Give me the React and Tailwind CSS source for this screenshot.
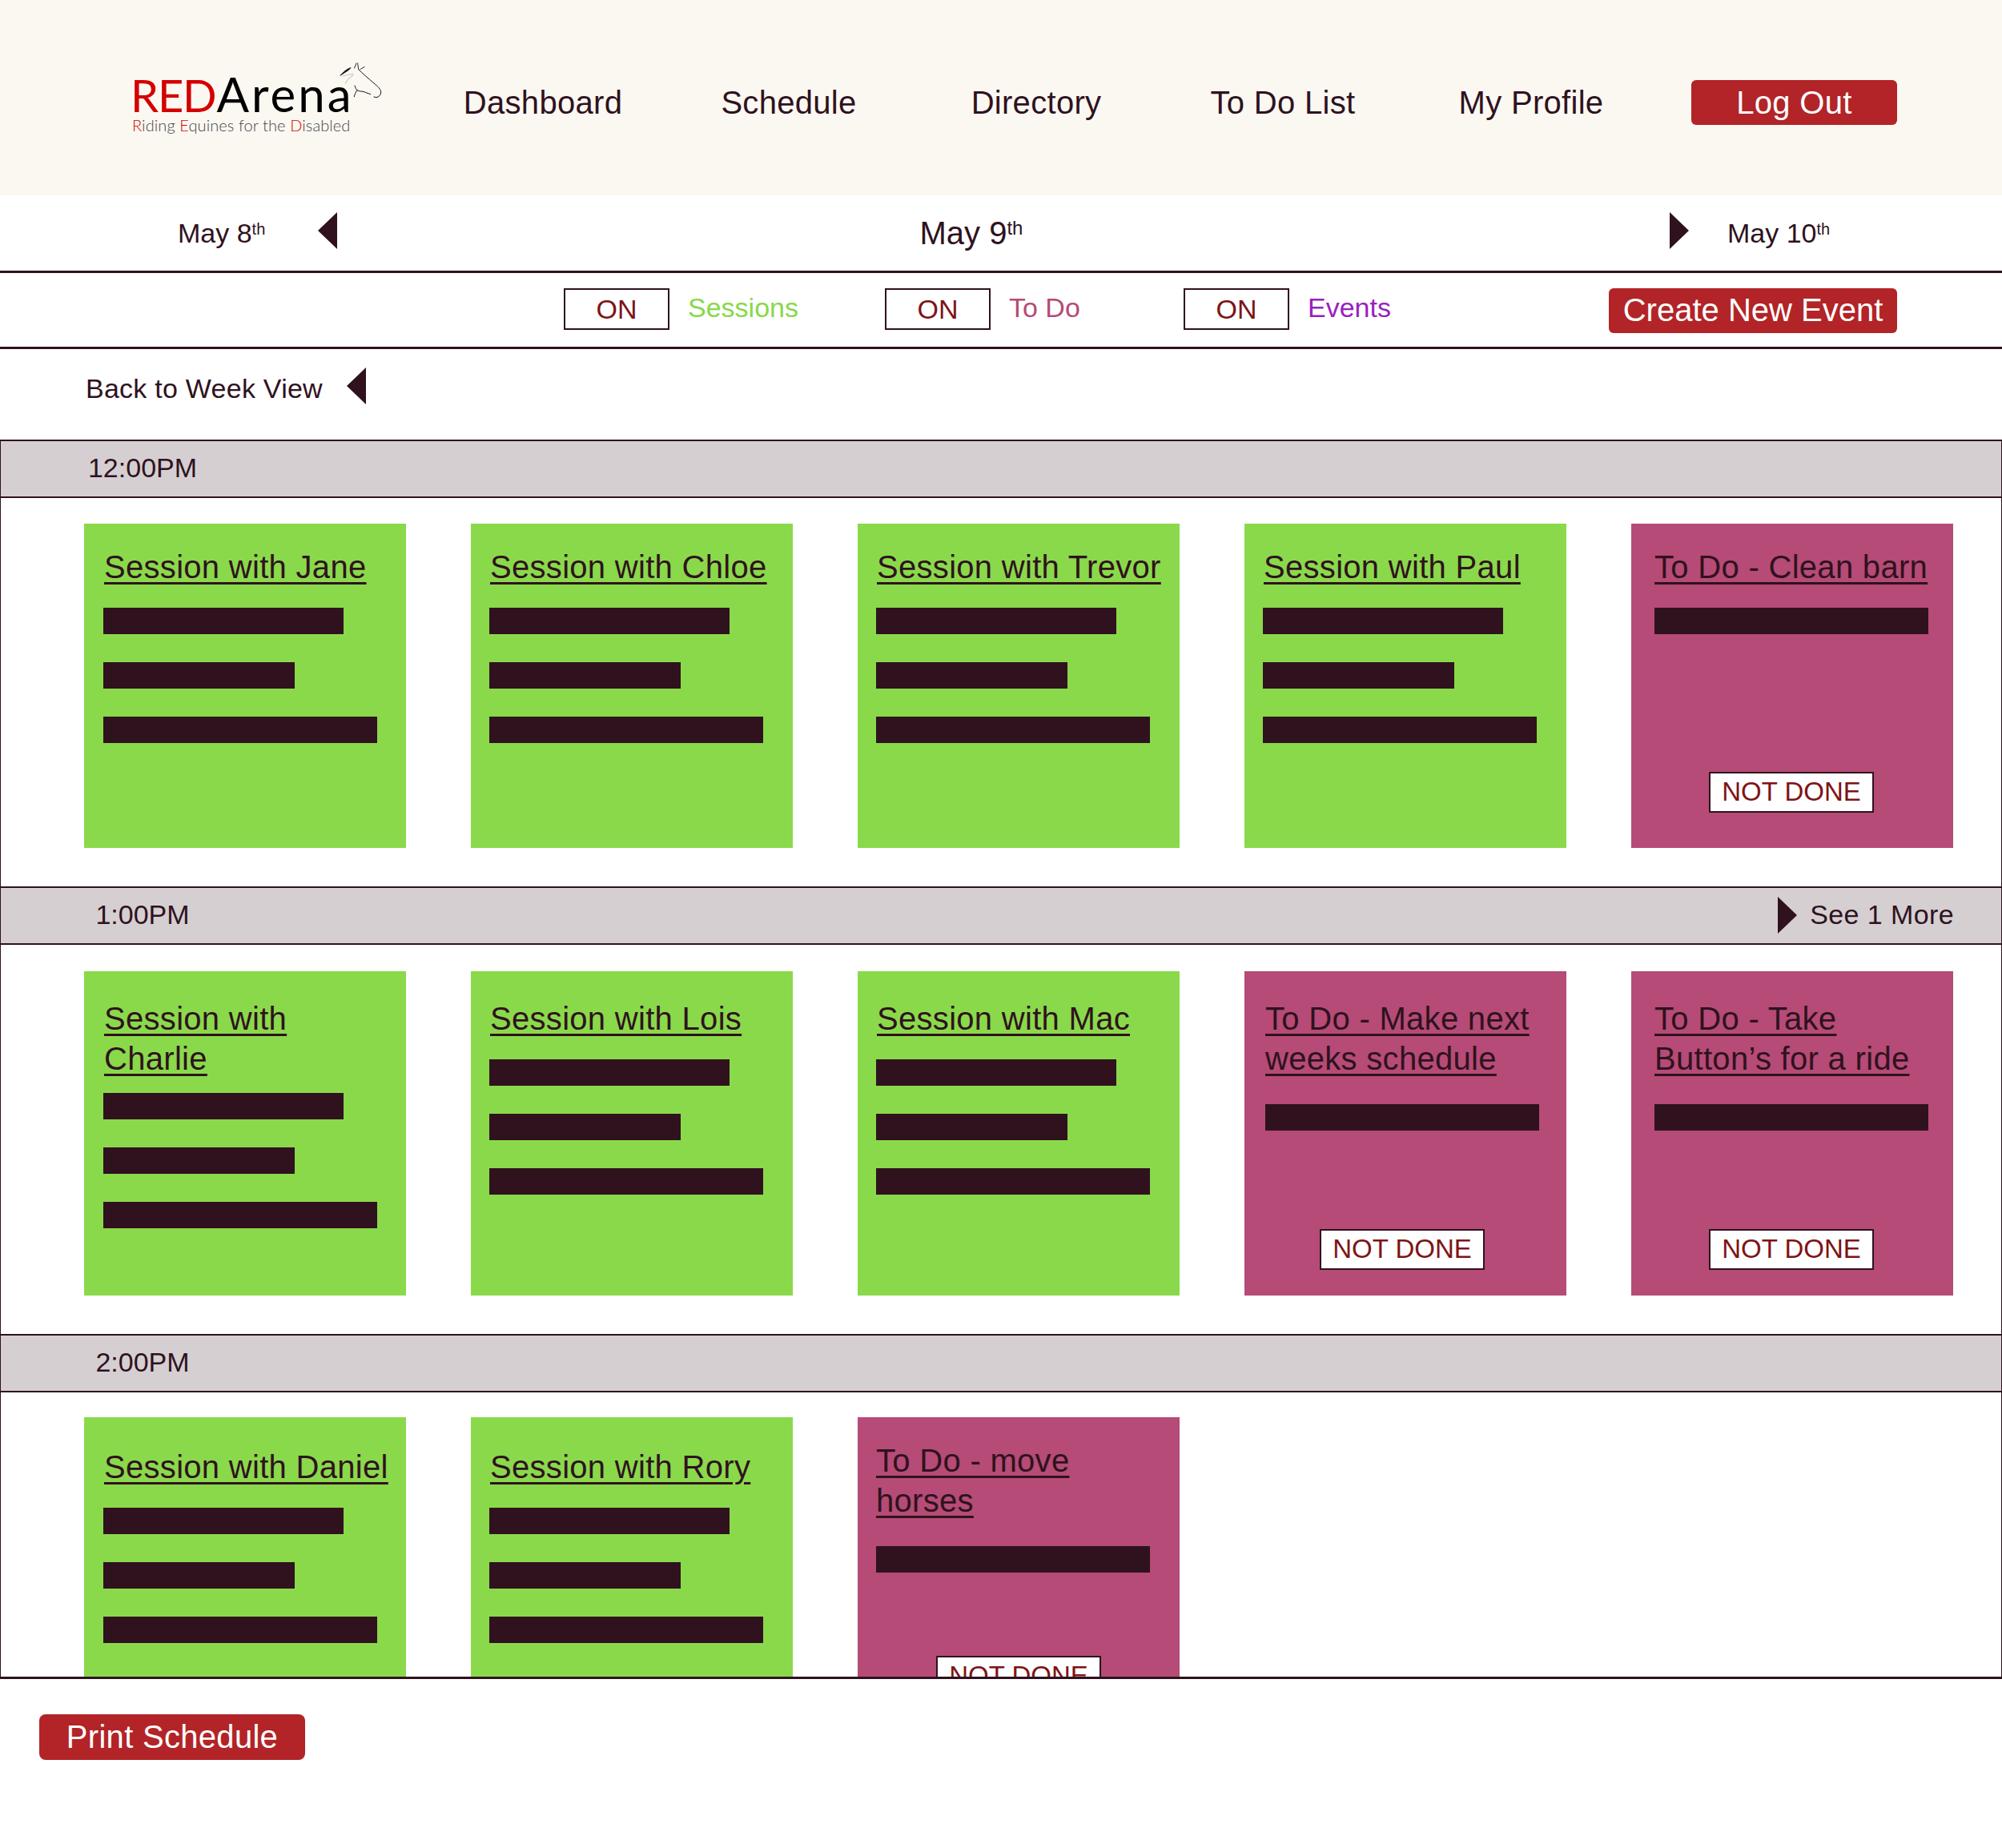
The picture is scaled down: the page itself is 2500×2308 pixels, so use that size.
const DARK = "#2f121e";

function Tri({ dir, className }) {
  return (
    <svg viewBox="0 0 24 46" preserveAspectRatio="none" className={className}>
      <polygon points={dir === "left" ? "24,0 24,46 0,23" : "0,0 0,46 24,23"} fill={DARK} />
    </svg>
  );
}

function Horse() {
  return (
    <svg viewBox="0 0 80 60" className="absolute left-[410px] top-[70px] w-[80px] h-[60px]" fill="none" stroke="#141414" strokeLinecap="round">
      <path d="M15 24 C19 20 23 16 28 14.5 C26 18 21 20 17 23 Z" fill="#141414" strokeWidth="0.8" />
      <path d="M18 25 C22 24 27 23 31 22" strokeWidth="0.5" stroke="#888" />
      <path d="M21.5 34 C23 30 27 26 31 24" strokeWidth="0.6" stroke="#888" />
      <path d="M32.5 15 L35 9 M37.7 16.5 L36.6 9 M40 16.5 L45 13.5" strokeWidth="0.9" />
      <path d="M37.7 16.7 C42 21 50 28 57 34 C62 38 65.7 42 65.7 45 C65.7 49 63 51 60 51.7 L57 51" strokeWidth="1" />
      <path d="M33 37 C34 40 35 42 36 42.7 C38 44 41 44 43 44.3 C46 45 49 46.5 52.7 47.7 M36 42.7 C34 45 33 48 32.3 50.7" strokeWidth="1" />
    </svg>
  );
}

function Header() {
  const items = [
    ["Dashboard", "w-[308px]"],
    ["Schedule", "w-[306px]"],
    ["Directory", "w-[312px]"],
    ["To Do List", "w-[304px]"],
    ["My Profile", "w-[316px]"],
  ];
  return (
    <header className="flex items-center h-[244px] bg-[#fbf8f2]">
      <div className="relative w-[524px] h-[244px] shrink-0 pt-[91px] pl-[163px] font-['Lato',sans-serif] whitespace-nowrap">
        <div className="text-[56px] leading-[53px]">
          <span className="text-[#d40000] tracking-[-1.2px]">RED</span>
          <span className="text-black text-[60px] tracking-[3px] ml-[1px]">Arena</span>
        </div>
        <div className="ml-[2px] text-[20px] leading-[22px] font-light tracking-[0.1px] text-[#444]">
          <span className="text-[#d40000]">R</span>iding <span className="text-[#d40000]">E</span>quines for the <span className="text-[#d40000]">D</span>isabled
        </div>
        <Horse />
      </div>
      <nav className="flex items-center mt-[12px] text-[40px] leading-[48px] tracking-[0.3px] text-[#2f121e]">
        {items.map(([t, w]) => (
          <span key={t} className={`${w} text-center whitespace-nowrap`}>{t}</span>
        ))}
        <span className="ml-[42px] w-[257px] h-[56px] rounded-[6px] bg-[#b22427] text-white text-center leading-[56px]">Log Out</span>
      </nav>
    </header>
  );
}

function DateRow() {
  return (
    <div className="flex items-center h-[97px] border-b-[3px] border-[#2f121e] text-[#2f121e] text-[34px]">
      <span className="ml-[222px] w-[175px] whitespace-nowrap">May 8<sup className="text-[20px]">th</sup></span>
      <Tri dir="left" className="w-[24px] h-[46px] -mt-[6px]" />
      <span className="ml-[642px] w-[300px] text-[40px] text-center whitespace-nowrap">May 9<sup className="text-[24px]">th</sup></span>
      <Tri dir="right" className="ml-[722px] w-[24px] h-[46px] -mt-[6px]" />
      <span className="ml-[48px] whitespace-nowrap">May 10<sup className="text-[20px]">th</sup></span>
    </div>
  );
}

function Toggle({ label, color, className }) {
  return (
    <div className={`flex items-center ${className}`}>
      <span className="w-[132px] h-[52px] border-2 border-[#2f121e] bg-white text-center text-[34px] leading-[48px] text-[#7e1416]">ON</span>
      <span className={`ml-[23px] -mt-[4px] text-[34px] ${color}`}>{label}</span>
    </div>
  );
}

function FilterRow() {
  return (
    <div className="flex items-start h-[95px] pt-[19px] border-b-[3px] border-[#2f121e]">
      <Toggle label="Sessions" color="text-[#86d94b]" className="ml-[704px] w-[401px]" />
      <Toggle label="To Do" color="text-[#b54b76]" className="w-[373px]" />
      <Toggle label="Events" color="text-[#9a1fbf]" className="w-[531px]" />
      <span className="w-[360px] h-[56px] rounded-[6px] bg-[#b22427] text-white text-center text-[40px] leading-[54px] whitespace-nowrap">Create New Event</span>
    </div>
  );
}

function BackRow() {
  return (
    <div className="flex items-center h-[113px] pl-[107px] pb-[15px] text-[34px] tracking-[0.25px] text-[#2f121e]">
      <span className="w-[326px] whitespace-nowrap">Back to Week View</span>
      <Tri dir="left" className="w-[24px] h-[46px] -mt-[6px]" />
    </div>
  );
}

function TimeBar({ label, more }) {
  return (
    <div className="flex items-center h-[73px] pb-[2px] bg-[#d5cfd2] border-y-2 border-x border-[#2f121e] text-[34px] text-[#2f121e]">
      <span className="w-[354px] text-center">{label}</span>
      {more && (
        <div className="ml-auto mr-[59px] flex items-center tracking-[0.4px]">
          <Tri dir="right" className="w-[24px] h-[46px] mr-[16px]" />
          <span className="whitespace-nowrap">See 1 More</span>
        </div>
      )}
    </div>
  );
}

function Title({ text, className }) {
  return (
    <div className={`text-[40px] leading-[50px] tracking-[0.3px] text-[#2f121e] underline decoration-[3px] underline-offset-[5px] ${className}`}>
      {text}
    </div>
  );
}

function Session({ title, pt, barMt, pl }) {
  return (
    <div className={`w-[402px] h-[405px] shrink-0 bg-[#8ad94b] ${pt} ${pl}`}>
      <Title text={title} className="pl-[1px]" />
      <div className={`${barMt} w-[300px] h-[33px] bg-[#2f121e]`} />
      <div className="mt-[35px] w-[239px] h-[33px] bg-[#2f121e]" />
      <div className="mt-[35px] w-[342px] h-[33px] bg-[#2f121e]" />
    </div>
  );
}

function Todo({ title, pt, pl, barMt, btnMt, btnX }) {
  return (
    <div className={`w-[402px] h-[405px] shrink-0 bg-[#b54b76] ${pt} ${pl}`}>
      <Title text={title} />
      <div className={`${barMt} w-[342px] h-[33px] bg-[#2f121e]`} />
      <div className={`${btnMt} ${btnX} w-[206px] h-[51px] border-2 border-[#2f121e] bg-white text-center text-[33px] leading-[46px] text-[#7e1416] whitespace-nowrap`}>NOT DONE</div>
    </div>
  );
}

function Row({ className, children }) {
  return <div className={`flex gap-[81px] pl-[104px] border-x border-[#2f121e] overflow-hidden ${className}`}>{children}</div>;
}

export default function App() {
  return (
    <div className="w-[2500px] h-[2308px] bg-white font-['Liberation_Sans',Arial,sans-serif]">
      <Header />
      <DateRow />
      <FilterRow />
      <BackRow />
      <TimeBar label="12:00PM" />
      <Row className="h-[485px] pt-[32px]">
        <Session title="Session with Jane" pt="pt-[29px]" barMt="mt-[26px]" pl="pl-[24px]" />
        <Session title="Session with Chloe" pt="pt-[29px]" barMt="mt-[26px]" pl="pl-[23px]" />
        <Session title="Session with Trevor" pt="pt-[29px]" barMt="mt-[26px]" pl="pl-[23px]" />
        <Session title="Session with Paul" pt="pt-[29px]" barMt="mt-[26px]" pl="pl-[23px]" />
        <Todo title="To Do - Clean barn" pt="pt-[29px]" pl="pl-[29px]" barMt="mt-[26px]" btnMt="mt-[172px]" btnX="ml-[68px]" />
      </Row>
      <TimeBar label="1:00PM" more />
      <Row className="h-[486px] pt-[33px]">
        <Session title={<>Session with<br />Charlie</>} pt="pt-[34px]" barMt="mt-[18px]" pl="pl-[24px]" />
        <Session title="Session with Lois" pt="pt-[34px]" barMt="mt-[26px]" pl="pl-[23px]" />
        <Session title="Session with Mac" pt="pt-[34px]" barMt="mt-[26px]" pl="pl-[23px]" />
        <Todo title={<>To Do - Make next<br />weeks schedule</>} pt="pt-[34px]" pl="pl-[26px]" barMt="mt-[32px]" btnMt="mt-[123px]" btnX="ml-[68px]" />
        <Todo title={<>To Do - Take<br />Button’s for a ride</>} pt="pt-[34px]" pl="pl-[29px]" barMt="mt-[32px]" btnMt="mt-[123px]" btnX="ml-[68px]" />
      </Row>
      <TimeBar label="2:00PM" />
      <Row className="h-[358px] pt-[31px] border-b-[3px]">
        <Session title="Session with Daniel" pt="pt-[37px]" barMt="mt-[26px]" pl="pl-[24px]" />
        <Session title="Session with Rory" pt="pt-[37px]" barMt="mt-[26px]" pl="pl-[23px]" />
        <Todo title={<>To Do - move<br />horses</>} pt="pt-[29px]" pl="pl-[23px]" barMt="mt-[32px]" btnMt="mt-[104px]" btnX="ml-[75px]" />
      </Row>
      <div className="pl-[49px] pt-[44px]">
        <span className="block w-[332px] h-[57px] rounded-[8px] bg-[#b22427] text-white text-center text-[40px] leading-[57px] tracking-[0.3px] whitespace-nowrap">Print Schedule</span>
      </div>
    </div>
  );
}
